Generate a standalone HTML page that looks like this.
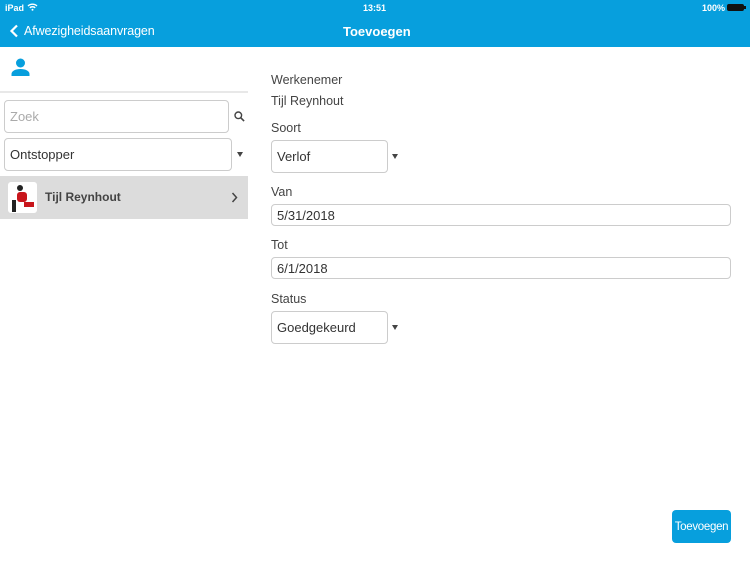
<!DOCTYPE html>
<html><head><meta charset="utf-8"><style>
*{box-sizing:border-box;margin:0;padding:0}
body{width:750px;height:562px;background:#fff;font-family:"Liberation Sans",sans-serif;position:relative;overflow:hidden;color:#333}
.hdr{position:absolute;left:0;top:0;width:750px;height:47px;background:#079fdd;color:#fff}
.abs{position:absolute}
.box{position:absolute;border:1px solid #ccc;border-radius:4px;background:#fff;font-size:13px;color:#333;padding-left:5px;display:flex;align-items:center}
.lbl{position:absolute;font-size:12.5px;color:#444}
.tri{position:absolute;width:0;height:0;border-left:3.5px solid transparent;border-right:3.5px solid transparent;border-top:5px solid #444}
</style></head><body>
<div class="hdr">
 <div class="abs" style="left:5px;top:3px;font-size:9px;font-weight:bold">iPad</div>
 <svg class="abs" style="left:27px;top:3px" width="11" height="8" viewBox="0 0 11 8"><path d="M1 3a6.5 6.5 0 0 1 9 0M2.8 4.8a4 4 0 0 1 5.4 0" stroke="#fff" stroke-width="1.4" fill="none"/><circle cx="5.5" cy="6.8" r="1" fill="#fff"/></svg>
 <div class="abs" style="left:363px;top:3px;font-size:9px;font-weight:bold">13:51</div>
 <div class="abs" style="left:702px;top:3px;font-size:9px;font-weight:bold">100%</div>
 <div class="abs" style="left:727px;top:4px;width:17px;height:7px;background:#111;border-radius:2px"></div>
 <div class="abs" style="left:744px;top:6px;width:2px;height:3px;background:#111"></div>
 <svg class="abs" style="left:9px;top:24px" width="10" height="14" viewBox="0 0 10 14"><path d="M8 1.5L2.5 7 8 12.5" stroke="#fff" stroke-width="2.2" fill="none"/></svg>
 <div class="abs" style="left:24px;top:24px;font-size:12.5px;letter-spacing:-0.1px">Afwezigheidsaanvragen</div>
 <div class="abs" style="left:343px;top:24px;font-size:13px;font-weight:bold">Toevoegen</div>
</div>
<svg class="abs" style="left:11px;top:58px" width="19" height="18" viewBox="0 0 19 18"><circle cx="9.5" cy="5" r="4.5" fill="#079fdd"/><path d="M0.5 18v-2c0-3 4-5 9-5s9 2 9 5v2z" fill="#079fdd"/></svg>
<div class="abs" style="left:0;top:91px;width:248px;height:2px;background:#e8e8e8"></div>
<div class="box" style="left:4px;top:100px;width:225px;height:33px;color:#aaa">Zoek</div>
<svg class="abs" style="left:234px;top:111px" width="11" height="11" viewBox="0 0 11 11"><circle cx="4.3" cy="4.3" r="3.3" stroke="#444" stroke-width="1.4" fill="none"/><path d="M6.8 6.8l3.3 3.3" stroke="#444" stroke-width="1.6"/></svg>
<div class="box" style="left:4px;top:138px;width:228px;height:33px">Ontstopper</div>
<div class="tri" style="left:237px;top:152px"></div>
<div class="abs" style="left:0;top:176px;width:248px;height:43px;background:#dcdcdc"></div>
<div class="abs" style="left:8px;top:182px;width:29px;height:31px;background:#fff;border-radius:3px;overflow:hidden">
 <div class="abs" style="left:9px;top:3px;width:6px;height:6px;border-radius:50%;background:#222"></div>
 <div class="abs" style="left:9px;top:10px;width:10px;height:10px;background:#c8161c;border-radius:3px"></div>
 <div class="abs" style="left:4px;top:18px;width:4px;height:12px;background:#222"></div>
 <div class="abs" style="left:16px;top:20px;width:10px;height:5px;background:#c8161c"></div>
</div>
<div class="abs" style="left:45px;top:190px;font-size:12px;font-weight:bold;color:#444">Tijl Reynhout</div>
<svg class="abs" style="left:231px;top:192px" width="7" height="11" viewBox="0 0 7 11"><path d="M1.5 1l4 4.5-4 4.5" stroke="#444" stroke-width="1.5" fill="none"/></svg>

<div class="lbl" style="left:271px;top:73px">Werkenemer</div>
<div class="abs" style="left:271px;top:94px;font-size:12.5px;color:#444">Tijl Reynhout</div>
<div class="lbl" style="left:271px;top:121px">Soort</div>
<div class="box" style="left:271px;top:140px;width:117px;height:33px">Verlof</div>
<div class="tri" style="left:392px;top:154px"></div>
<div class="lbl" style="left:271px;top:185px">Van</div>
<div class="box" style="left:271px;top:204px;width:460px;height:22px">5/31/2018</div>
<div class="lbl" style="left:271px;top:238px">Tot</div>
<div class="box" style="left:271px;top:257px;width:460px;height:22px">6/1/2018</div>
<div class="lbl" style="left:271px;top:292px">Status</div>
<div class="box" style="left:271px;top:311px;width:117px;height:33px">Goedgekeurd</div>
<div class="tri" style="left:392px;top:325px"></div>
<div class="abs" style="left:672px;top:510px;width:59px;height:33px;background:#079fdd;border-radius:4px;color:#fff;font-size:11.5px;display:flex;align-items:center;justify-content:center;letter-spacing:-0.3px">Toevoegen</div>
</body></html>
